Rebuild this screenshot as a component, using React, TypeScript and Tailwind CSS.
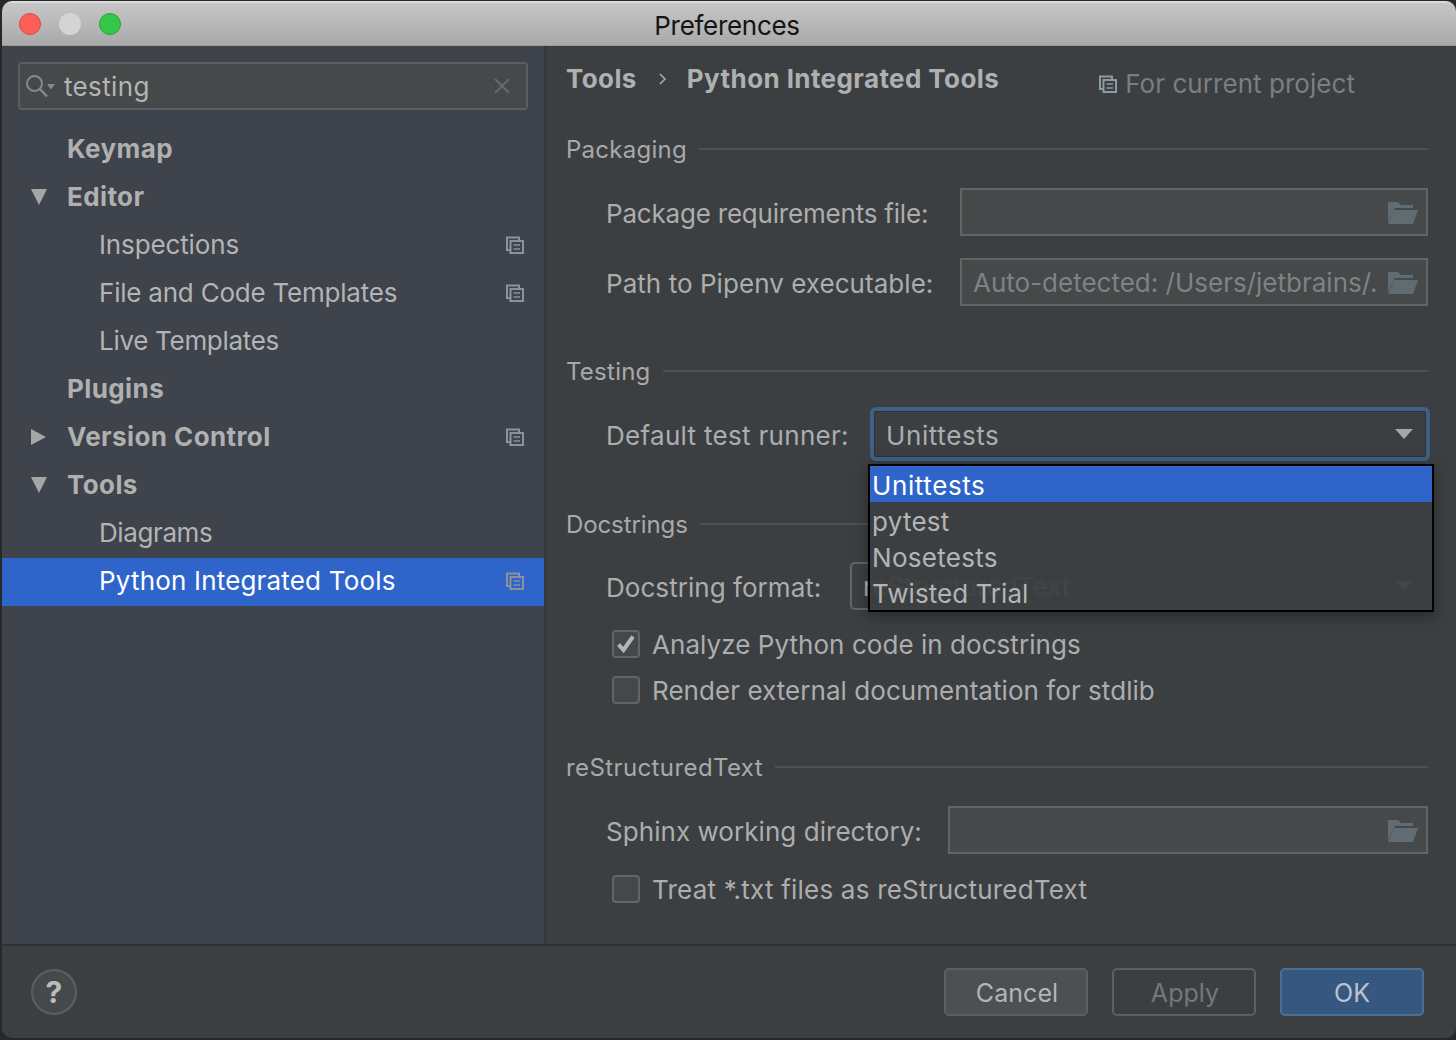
import React from 'react';

const ProjectIcon: React.FC<{ className?: string }> = ({ className = 'text-[#8a939b]' }) => (
    <svg width="20" height="20" viewBox="0 0 20 20" fill="none" stroke="currentColor" strokeWidth="2" className={className}>
        <path d="M5 15H2V2.5h12V5" />
        <rect x="5.5" y="6" width="12.5" height="12" />
        <path d="M8.5 10h6.5M8.5 14h6.5" strokeWidth="1.6" />
    </svg>
);

const FolderIcon = () => (
    <svg width="30" height="24" viewBox="0 0 30 24" className="shrink-0 mt-[3px]">
        <path d="M0 0h10l3 3h12v3H7L0 20z" fill="#616c72" />
        <path d="M6 8h24l-5 14H0z" fill="#616c72" />
    </svg>
);

const Triangle: React.FC<{ dir: 'down' | 'right' }> = ({ dir }) => (
    <svg width="18" height="18" viewBox="0 0 18 18" className="shrink-0" fill="#a6a6a6">
        {dir === 'down' ? <path d="M1 1h16L9 17z" /> : <path d="M1 1l15 8-15 8z" />}
    </svg>
);

const sidebarItems = [
    { label: 'Keymap', bold: true },
    { label: 'Editor', bold: true, arrow: 'down' as const },
    { label: 'Inspections', project: true, tracking: 'tracking-[-0.13px]' },
    { label: 'File and Code Templates', project: true, tracking: 'tracking-[-0.22px]' },
    { label: 'Live Templates', tracking: 'tracking-[-0.3px]' },
    { label: 'Plugins', bold: true },
    { label: 'Version Control', bold: true, arrow: 'right' as const, project: true },
    { label: 'Tools', bold: true, arrow: 'down' as const },
    { label: 'Diagrams', tracking: 'tracking-[-0.4px]' },
    { label: 'Python Integrated Tools', project: true, selected: true, tracking: 'tracking-[0.18px]' },
];

const Sidebar = () => (
    <div className="w-[542px] shrink-0 bg-[#3e434c] flex flex-col">
        <div className="mt-[16px] mx-[16px] h-[48px] w-[510px] flex items-center bg-[#45494a] border-2 border-[#5b5f62] rounded-[4px] relative">
            <svg width="30" height="28" viewBox="0 0 30 28" fill="none" className="ml-[6px] shrink-0" stroke="#7f8b91" strokeWidth="2">
                <circle cx="8.5" cy="11.5" r="7.5" />
                <path d="M14 17l7 7.5" strokeWidth="2.5" />
                <path d="M21 12h8l-4 5.5z" fill="#7f8b91" stroke="none" />
            </svg>
            <span className="ml-[8px] text-[#b4b4b4] tracking-[0.35px]">testing</span>
            <svg width="18" height="18" viewBox="0 0 18 18" className="ml-auto mr-[15px]" stroke="#646a6d" strokeWidth="2">
                <path d="M2 2l14 14M16 2L2 16" />
            </svg>
        </div>
        <div className="mt-[16px] flex flex-col">
            {sidebarItems.map(item => (
                <div
                    key={item.label}
                    className={`h-[48px] pb-[3px] flex items-center ${item.selected ? 'bg-[#2f65ca] text-white' : 'text-[#b4b4b4]'}`}
                >
                    <div className="w-[28px] shrink-0" />
                    <div className="w-[37px] shrink-0 flex">{item.arrow && <Triangle dir={item.arrow} />}</div>
                    <span className={item.bold ? 'font-bold text-[#b0b0b0] tracking-[0.4px]' : `ml-[32px] ${item.tracking}`}>{item.label}</span>
                    {item.project && (
                        <span className="ml-auto mr-[19px] flex">
                            <ProjectIcon />
                        </span>
                    )}
                </div>
            ))}
        </div>
    </div>
);

const SectionTitle: React.FC<{ title: string; className: string; tracking?: string }> = ({ title, className, tracking = 'tracking-[0.25px]' }) => (
    <div className={`h-[28px] flex items-center gap-[12px] ${className}`}>
        <span className={`text-[#a9a9a9] text-[24px] pt-[2px] ${tracking}`}>{title}</span>
        <div className="flex-1 h-[2px] bg-[#51504e]" />
    </div>
);

const PathField: React.FC<{ label: string; labelWidth: string; className: string; labelTracking?: string; value?: string }> = ({ label, labelWidth, className, labelTracking, value }) => (
    <div className={`flex items-center pl-[40px] ${className}`}>
        <span className={`${labelWidth} shrink-0 pt-[2px] text-[#adadad] ${labelTracking ?? ''}`}>{label}</span>
        <div className="flex-1 min-w-0 h-[48px] bg-[#45494a] border-2 border-[#646464] flex items-center pl-[11px] pr-[8px]">
            <span className="text-[#7f8284] whitespace-nowrap tracking-[0px]">{value}</span>
            <span className="ml-auto flex"><FolderIcon /></span>
        </div>
    </div>
);

const CheckRow: React.FC<{ label: string; checked?: boolean; className: string; tracking?: string }> = ({ label, checked, className, tracking }) => (
    <div className={`flex items-center pl-[46px] gap-[12px] h-[28px] ${className}`}>
        <div className="w-[28px] h-[28px] rounded-[4px] bg-[#43494a] border-2 border-[#646464] flex items-center justify-center">
            {checked && (
                <svg width="20" height="20" viewBox="0 0 20 20" fill="none" stroke="#b4b4b4" strokeWidth="4">
                    <path d="M2.5 10.5l5 5.5L17 2.5" />
                </svg>
            )}
        </div>
        <span className={`text-[#adadad] ${tracking ?? ''}`}>{label}</span>
    </div>
);

const RunnerDropdown = () => (
    <div className="absolute left-[322px] top-[418px] w-[566px] h-[148px] bg-[#3c3f41]/95 border-2 border-black shadow-[0_4px_14px_rgba(0,0,0,0.35)] flex flex-col text-[#b4b4b4] z-10">
        <div className="h-[36px] bg-[#2f65ca] text-white pl-[2px] pt-[2px] flex items-center tracking-[0.6px]">Unittests</div>
        <div className="h-[36px] pl-[2px] pt-[2px] flex items-center tracking-[0.25px]">pytest</div>
        <div className="h-[36px] pl-[2px] pt-[2px] flex items-center tracking-[0.3px]">Nosetests</div>
        <div className="h-[36px] pl-[2px] pt-[2px] flex items-center">Twisted Trial</div>
    </div>
);

const RightPane = () => (
    <div className="flex-1 min-w-0 bg-[#3c3f41] pl-[20px] pr-[28px] relative">
        <div className="h-[66px] flex items-center font-bold text-[#b0b0b0] tracking-[0.4px]">
            <span className="-mt-[1px]">Tools</span>
            <svg width="10" height="14" viewBox="0 0 10 14" fill="none" stroke="#a8a8a8" strokeWidth="1.6" className="ml-[21px] mr-[19px]">
                <path d="M2 2l5 5-5 5" />
            </svg>
            <span className="-mt-[1px]">Python Integrated Tools</span>
            <span className="ml-auto mr-[73px] mt-[9px] flex items-center gap-[7px] font-normal tracking-[0.05px] text-[#7b7e80]">
                <ProjectIcon className="text-[#8c9aa3]" />
                For current project
            </span>
        </div>
        <SectionTitle title="Packaging" className="mt-[23px]" />
        <PathField label="Package requirements file:" labelWidth="w-[354px]" labelTracking="tracking-[-0.2px]" className="mt-[25px]" />
        <PathField label="Path to Pipenv executable:" labelWidth="w-[354px]" className="mt-[22px]" value="Auto-detected: /Users/jetbrains/." />
        <SectionTitle title="Testing" className="mt-[51px]" />
        <div className="mt-[22px] flex items-center pl-[40px]">
            <span className="w-[264px] shrink-0 pt-[2px] text-[#adadad] tracking-[0.3px]">Default test runner:</span>
            <div className="flex-1 min-w-0 -mr-[2px] h-[54px] rounded-[6px] border-[4px] border-[#3d6185] bg-[#3c3f41] flex items-center pl-[12px] pr-[13px] outline outline-1 -outline-offset-[5px] outline-[#303234]">
                <span className="pt-[2px] text-[#adadad] tracking-[0.6px]">Unittests</span>
                <svg width="18" height="10" viewBox="0 0 18 10" className="ml-auto" fill="#a6a6a6">
                    <path d="M0 0h18L9 10z" />
                </svg>
            </div>
        </div>
        <RunnerDropdown />
        <SectionTitle title="Docstrings" className="mt-[49px]" tracking="tracking-[-0.1px]" />
        <div className="mt-[24px] flex items-center pl-[40px]">
            <span className="w-[244px] shrink-0 pt-[2px] text-[#adadad]">Docstring format:</span>
            <div className="flex-1 min-w-0 h-[48px] rounded-[5px] border-2 border-[#646464] flex items-center pl-[11px] pr-[13px]">
                <span className="text-[#adadad]">reStructuredText</span>
                <svg width="18" height="10" viewBox="0 0 18 10" className="ml-auto" fill="#a6a6a6">
                    <path d="M0 0h18L9 10z" />
                </svg>
            </div>
        </div>
        <CheckRow label="Analyze Python code in docstrings" checked className="mt-[20px]" />
        <CheckRow label="Render external documentation for stdlib" className="mt-[18px]" />
        <SectionTitle title="reStructuredText" className="mt-[49px]" tracking="tracking-[0.4px]" />
        <PathField label="Sphinx working directory:" labelWidth="w-[342px]" className="mt-[25px]" />
        <CheckRow label="Treat *.txt files as reStructuredText" tracking="tracking-[0.22px]" className="mt-[21px]" />
    </div>
);

const Footer = () => (
    <div className="h-[94px] shrink-0 bg-[#3c3f41] border-t-2 border-[#323232] rounded-b-[10px] flex items-center pl-[29px] pr-[32px]">
        <div className="w-[46px] h-[46px] rounded-full bg-[#46494b] border-2 border-[#5e6060] flex items-center justify-center text-[#bbbbbb] font-bold text-[30px]">?</div>
        <button className="ml-auto w-[144px] h-[48px] pt-[3px] pl-[2px] rounded-[5px] bg-[#4c5052] border-2 border-[#5e6060] text-[25px] text-[#b4b4b4]">Cancel</button>
        <button className="ml-[24px] w-[144px] h-[48px] pt-[3px] pl-[2px] rounded-[5px] border-2 border-[#5e6060] text-[25px] text-[#777777]">Apply</button>
        <button className="ml-[24px] w-[144px] h-[48px] pt-[3px] rounded-[5px] bg-[#365880] border-2 border-[#4c708c] text-[25px] text-[#bbc4cc]">OK</button>
    </div>
);

export default function App() {
    return (
        <div className="w-[1456px] h-[1040px] bg-[#26282a] pt-[1px] pl-[2px] pb-[2px] overflow-hidden font-['Inter',sans-serif] text-[26px] tracking-[0.05px]">
            <div className="h-full flex flex-col rounded-t-[10px] overflow-hidden">
                <div className="h-[45px] shrink-0 bg-gradient-to-b from-[#c6c6c6] to-[#a9a9a9] border-t-2 border-t-[#dadada] border-b border-b-[#9a9a9a] flex items-center relative">
                    <div className="ml-[17px] flex gap-[18px]">
                        <div className="w-[22px] h-[22px] rounded-full bg-[#fc5f57] border border-[#de4841]" />
                        <div className="w-[22px] h-[22px] rounded-full bg-[#d4d4d4]" />
                        <div className="w-[22px] h-[22px] rounded-full bg-[#34c748] border border-[#28a636]" />
                    </div>
                    <span className="absolute left-0 right-[4px] text-center pt-[2px] text-[#141414] tracking-[-0.3px]">Preferences</span>
                </div>
                <div className="flex-1 flex min-h-0">
                    <Sidebar />
                    <div className="w-[2px] bg-[#343639]" />
                    <RightPane />
                </div>
                <Footer />
            </div>
        </div>
    );
}
